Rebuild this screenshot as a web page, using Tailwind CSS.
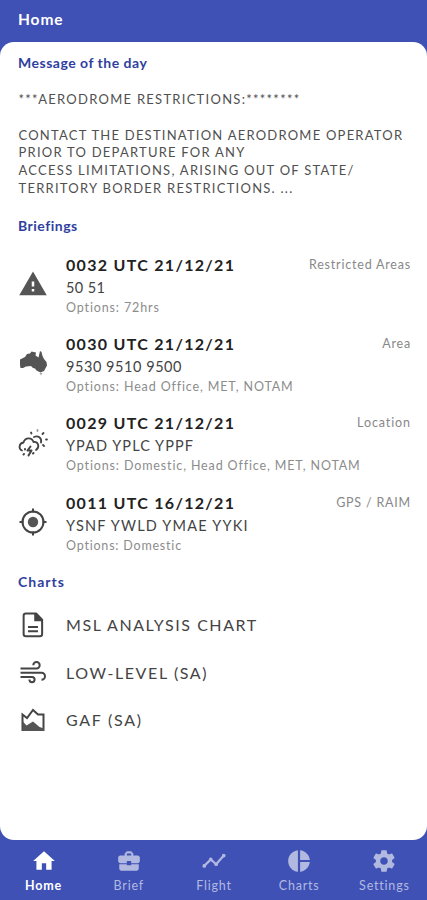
<!DOCTYPE html>
<html lang="en">
<head>
    <meta charset="UTF-8">
    <meta name="viewport" content="width=device-width, initial-scale=1.0">
    <title>Home</title>
    <script src="https://cdn.jsdelivr.net/npm/@tailwindcss/browser@4"></script>
</head>
<body class="bg-[#3f51b5] font-['Lato',sans-serif] w-[427px] h-[900px] flex flex-col overflow-hidden whitespace-nowrap">
    <header class="h-[42px] shrink-0 pl-[18px] pt-[7px] text-white text-[15.5px] leading-6 font-bold tracking-[0.9px]">Home</header>

    <main class="h-[798px] shrink-0 bg-white rounded-[14px] pl-[18px] pr-[16px] text-[#505050]">
        <h2 class="pt-[11px] text-[14px] leading-5 font-bold tracking-[0.5px] text-[#303f9f]">Message of the day</h2>
        <div class="mt-[18px] text-[13px] leading-[17.8px] pl-[0.5px]">
            <p class="tracking-[1.27px]">***AERODROME RESTRICTIONS:********</p>
            <p class="mt-[17.8px] tracking-[1.23px]">CONTACT THE DESTINATION AERODROME OPERATOR</p>
            <p class="tracking-[1.23px]">PRIOR TO DEPARTURE FOR ANY</p>
            <p class="tracking-[1.27px]">ACCESS LIMITATIONS, ARISING OUT OF STATE/</p>
            <p class="tracking-[1.25px]">TERRITORY BORDER RESTRICTIONS. ...</p>
        </div>

        <h2 class="mt-[18px] text-[14px] leading-5 font-bold tracking-[0.5px] text-[#303f9f]">Briefings</h2>
        <ul class="mt-[18px]">
            <li class="h-[79.3px] flex">
                <svg class="w-[30px] h-[30px] mt-[15px] mr-[18px] shrink-0" viewBox="0 0 24 24" fill="#555"><path d="M1 21h22L12 2 1 21zm12-3h-2v-2h2v2zm0-4h-2v-4h2v4z"/></svg>
                <div class="grow">
                    <div class="flex justify-between leading-[22px]">
                        <b class="text-[16px] text-[#222] tracking-[1.3px]">0032 UTC 21/12/21</b>
                        <span class="text-[12.5px] text-[#888] tracking-[0.8px]">Restricted Areas</span>
                    </div>
                    <p class="pt-px text-[14.5px] leading-[22px] text-[#444] tracking-[0.4px]">50 51</p>
                    <p class="-mt-px text-[12.5px] leading-5 text-[#8c8c8c] tracking-[0.87px]">Options: 72hrs</p>
                </div>
            </li>
            <li class="h-[79.3px] flex">
                <svg class="w-[30px] h-[30px] mt-[14px] mr-[18px] shrink-0" viewBox="0 0 30 30" fill="#555"><path d="M2 12.500l5-2.500 2-3 3-.5 1.500-2 4.500 1-.5 3 3 2 1.500-6.500 1.500 1 1 4 1.500 3 2.500 3 .5 3.500-3 5.500-3.500 1.500-4-2-1.500-2-2-.5-2-2-5 .5-3 1.500-2.500 0-.5-3z"/><path d="M21.500 26h3l-1.500 2.500z" fill="#aaa"/></svg>
                <div class="grow">
                    <div class="flex justify-between leading-[22px]">
                        <b class="text-[16px] text-[#222] tracking-[1.3px]">0030 UTC 21/12/21</b>
                        <span class="text-[12.5px] text-[#888] tracking-[0.8px]">Area</span>
                    </div>
                    <p class="pt-px text-[14.5px] leading-[22px] text-[#444] tracking-[0.55px]">9530 9510 9500</p>
                    <p class="-mt-px text-[12.5px] leading-5 text-[#8c8c8c] tracking-[0.87px]">Options: Head Office, MET, NOTAM</p>
                </div>
            </li>
            <li class="h-[79.3px] flex">
                <svg class="w-[30px] h-[30px] mt-[16px] mr-[18px] shrink-0" viewBox="0 0 30 30" fill="none" stroke="#444" stroke-width="1.8" stroke-linecap="round" stroke-linejoin="round">
                    <path d="M4 22.500C.5 21 .5 15.500 5.500 14.500 7 9 14 9 15.500 14c5-.5 6.500 5 2.500 8M16 9c4-2 8 1 7 5.500M13 4.500l.5 1M25.500 5l-1 1M28 11.500h1M25 17l1 1"/>
                    <path d="M19.500 2v1" stroke="#999"/>
                    <path d="M12.500 18.500l-3 4h4l-3 5M7 21v.5M5.500 26.500l.5-.5M15 25.500l.5-.5" stroke-width="2"/>
                </svg>
                <div class="grow">
                    <div class="flex justify-between leading-[22px]">
                        <b class="text-[16px] text-[#222] tracking-[1.3px]">0029 UTC 21/12/21</b>
                        <span class="text-[12.5px] text-[#888] tracking-[0.9px]">Location</span>
                    </div>
                    <p class="pt-px text-[14.5px] leading-[22px] text-[#444] tracking-[1.05px]">YPAD YPLC YPPF</p>
                    <p class="-mt-px text-[12.5px] leading-5 text-[#8c8c8c] tracking-[0.87px]">Options: Domestic, Head Office, MET, NOTAM</p>
                </div>
            </li>
            <li class="h-[79.3px] flex">
                <svg class="w-[30px] h-[30px] mt-[15px] mr-[18px] shrink-0" viewBox="0 0 30 30" fill="none" stroke="#444" stroke-width="2"><circle cx="15" cy="15" r="10.500"/><circle cx="15" cy="15" r="5.200" fill="#555" stroke="none"/><path d="M15 1.500v4M15 24.500v4M1.500 15h4M24.500 15h4"/></svg>
                <div class="grow">
                    <div class="flex justify-between leading-[22px]">
                        <b class="text-[16px] text-[#222] tracking-[1.3px]">0011 UTC 16/12/21</b>
                        <span class="text-[12.5px] text-[#888] tracking-[0.8px]">GPS / RAIM</span>
                    </div>
                    <p class="pt-px text-[14.5px] leading-[22px] text-[#444] tracking-[1.2px]">YSNF YWLD YMAE YYKI</p>
                    <p class="-mt-px text-[12.5px] leading-5 text-[#8c8c8c] tracking-[0.8px]">Options: Domestic</p>
                </div>
            </li>
        </ul>

        <h2 class="mt-[1px] text-[14px] leading-5 font-bold tracking-[1px] text-[#303f9f]">Charts</h2>
        <ul class="mt-[9px] text-[16px] text-[#444]">
            <li class="h-[47.7px] flex items-center gap-[18px]">
                <svg class="w-[30px] h-[30px]" viewBox="0 0 24 24" fill="none" stroke="#444" stroke-width="1.6" stroke-linejoin="round"><path d="M14.500 2.800H6.300Q4.500 2.800 4.500 4.600v14.600q0 1.800 1.800 1.800h11.200q1.800 0 1.800-1.800V7.800z"/><path d="M13.500 3v5.500h5.500z" fill="#444" stroke-width="1"/><path d="M8 13.500h8M8 17h8"/></svg>
                <span class="tracking-[1.55px]">MSL ANALYSIS CHART</span>
            </li>
            <li class="h-[47.7px] flex items-center gap-[18px]">
                <svg class="w-[30px] h-[30px]" viewBox="0 0 30 30" fill="none" stroke="#444" stroke-width="2"><path d="M15.300 7.300a3.200 3.200 0 1 1 3.200 3.200H2.500M2.500 14.700H23.500a3.300 3.300 0 1 1 0 7M2.500 19H14a2.600 2.600 0 1 1-2.600 2.600"/></svg>
                <span class="tracking-[1.6px]">LOW-LEVEL (SA)</span>
            </li>
            <li class="h-[47.7px] flex items-center gap-[18px]">
                <svg class="w-[30px] h-[30px]" viewBox="0 0 30 30" fill="none" stroke="#444" stroke-width="2"><path d="M4.500 9.500l4.500 3.500 6-8 5 4.500h5.500V25H4.500z"/><path d="M4.500 16l4 4.500 6.500-4 6.500 5.500 4.500 1.500V26H4.500z" fill="#555" stroke="none"/></svg>
                <span class="tracking-[1.7px]">GAF (SA)</span>
            </li>
        </ul>
    </main>

    <nav class="h-[60px] shrink-0 grid grid-cols-5 pt-[8px] pl-px text-[12.5px] leading-[18px] tracking-[0.8px] text-[#b2b9e1]">
        <a class="flex flex-col items-center gap-[3px] text-white font-bold">
            <svg class="w-[26px] h-[26px]" viewBox="0 0 24 24" fill="currentColor"><path d="M10 20v-6h4v6h5v-8h3L12 3 2 12h3v8z"/></svg>Home
        </a>
        <a class="flex flex-col items-center gap-[3px]">
            <svg class="w-[26px] h-[26px]" viewBox="0 0 24 24" fill="currentColor"><path d="M10 16v-1H3.010L3 19c0 1.110.89 2 2 2h14c1.110 0 2-.89 2-2v-4h-7v1h-4zm10-9h-4.010V5l-2-2h-4l-2 2v2H4c-1.100 0-2 .9-2 2v3c0 1.110.89 2 2 2h6v-2h4v2h6c1.100 0 2-.9 2-2V9c0-1.100-.9-2-2-2zm-6 0h-4V5h4v2z"/></svg>Brief
        </a>
        <a class="flex flex-col items-center gap-[3px]">
            <svg class="w-[26px] h-[26px]" viewBox="0 0 24 24" fill="currentColor" stroke="currentColor"><path d="M3 16.500L9 10.500l5 4.500 7-8" fill="none" stroke-width="2"/><circle cx="3" cy="16.500" r="1.200"/><circle cx="9" cy="10.500" r="1.200"/><circle cx="14" cy="15" r="1.200"/><circle cx="21" cy="7" r="1.200"/></svg>Flight
        </a>
        <a class="flex flex-col items-center gap-[3px]">
            <svg class="w-[26px] h-[26px]" viewBox="0 0 24 24" fill="currentColor"><path d="M11 2v20c-5.070-.5-9-4.790-9-10s3.930-9.500 9-10zm2.030 0v8.990H22c-.47-4.740-4.240-8.520-8.970-8.990zm0 11.010V22c4.740-.47 8.500-4.250 8.970-8.990h-8.970z"/></svg>Charts
        </a>
        <a class="flex flex-col items-center gap-[3px]">
            <svg class="w-[26px] h-[26px]" viewBox="0 0 24 24" fill="currentColor"><path d="M19.430 12.980c.04-.32.07-.64.07-.98s-.03-.66-.07-.98l2.110-1.650c.19-.15.24-.42.12-.64l-2-3.460c-.12-.22-.39-.3-.61-.22l-2.490 1c-.52-.4-1.080-.73-1.690-.98l-.38-2.650C14.460 2.180 14.250 2 14 2h-4c-.25 0-.46.18-.49.42l-.38 2.650c-.61.25-1.170.59-1.690.98l-2.490-1c-.23-.09-.49 0-.61.22l-2 3.460c-.13.22-.07.49.12.64l2.110 1.650c-.04.32-.07.65-.07.98s.03.66.07.98l-2.110 1.650c-.19.15-.24.42-.12.64l2 3.460c.12.22.39.3.61.22l2.490-1c.52.4 1.080.73 1.690.98l.38 2.650c.03.24.24.42.49.42h4c.25 0 .46-.18.49-.42l.38-2.650c.61-.25 1.170-.59 1.690-.98l2.490 1c.23.09.49 0 .61-.22l2-3.460c.12-.22.07-.49-.12-.64l-2.110-1.650zM12 15.500c-1.930 0-3.500-1.570-3.500-3.500s1.570-3.500 3.500-3.500 3.500 1.570 3.500 3.500-1.570 3.500-3.500 3.500z"/></svg>Settings
        </a>
    </nav>
</body>
</html>
